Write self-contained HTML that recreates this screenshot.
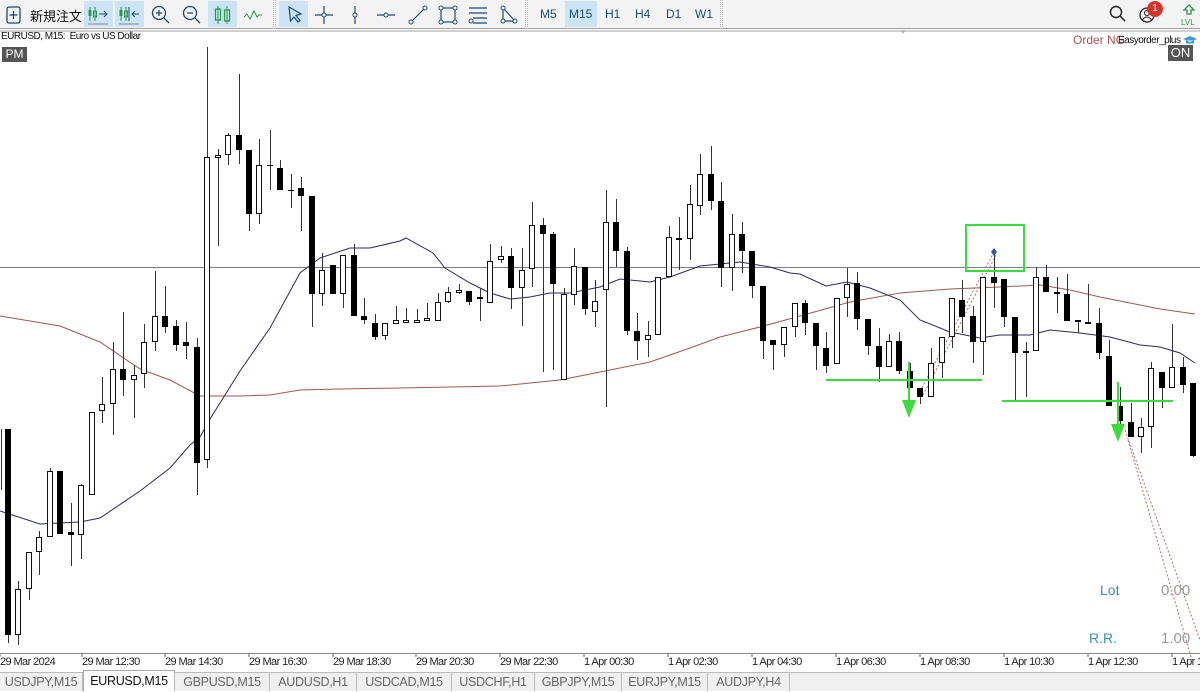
<!DOCTYPE html>
<html><head><meta charset="utf-8"><style>
*{margin:0;padding:0;box-sizing:border-box}
body{width:1200px;height:691px;overflow:hidden;background:#fff;font-family:"Liberation Sans","Noto Sans CJK JP",sans-serif;position:relative}
#tb{position:absolute;left:0;top:0;width:1200px;height:29px;background:#f3f3f3;border-bottom:1px solid #a0a0a0}
#tb2{position:absolute;left:0;top:30px;width:1200px;height:2px;background:#d0d0d0}
.hl{position:absolute;top:1px;height:26px;background:#cce4f7}
.ic{position:absolute;top:4px}
.tf{position:absolute;top:7px;font-size:12px;color:#1a4a7a}
.sep{position:absolute;top:0;width:3px;height:29px;border-left:1px dotted #bbb;border-right:1px dotted #bbb}
.ax{position:absolute;top:656px;font-size:11px;color:#222;letter-spacing:-0.6px;white-space:nowrap}
#tabs{position:absolute;left:0;top:672px;width:1200px;height:19px;background:#f0f0f0;border-top:1px solid #bbb}
.tab{position:absolute;top:673px;height:18px;font-size:12.5px;color:#666;border-right:1px solid #bbb;text-align:center;line-height:18px;letter-spacing:-0.3px;white-space:nowrap}
</style></head><body>
<div id="tb"></div><div id="tb2"></div>
<svg class="ic" style="left:4px;top:5px" width="20" height="20" viewBox="0 0 20 20"><rect x="3" y="2" width="13" height="16" rx="2" fill="none" stroke="#1a4a7a" stroke-width="1.3"/><path d="M9.5 6v8M5.5 10h8" stroke="#1a4a7a" stroke-width="1.3"/></svg>
<div style="position:absolute;left:30px;top:6px;font-size:13px;color:#111">新規注文</div>
<div class="hl" style="left:84px;width:29px"></div>
<div class="hl" style="left:115px;width:29px"></div>
<div class="hl" style="left:208px;width:29px"></div>
<div class="hl" style="left:279px;width:29px"></div>
<div class="hl" style="left:565px;width:32px"></div>
<svg class="ic" style="left:86px" width="24" height="22"><path d="M4 3v14M9 3v14" stroke="#2a9a4a"/><rect x="2.5" y="6" width="3" height="6" fill="#2a9a4a"/><rect x="7.5" y="7" width="3" height="6" fill="none" stroke="#2a9a4a"/><path d="M13 10h8M18 7l3 3-3 3" stroke="#1a4a7a" fill="none"/><path d="M2 20h20" stroke="#888"/></svg>
<svg class="ic" style="left:117px" width="24" height="22"><path d="M4 3v14M9 3v14" stroke="#2a9a4a"/><rect x="2.5" y="6" width="3" height="6" fill="#2a9a4a"/><rect x="7.5" y="7" width="3" height="6" fill="none" stroke="#2a9a4a"/><path d="M12 3v14M22 10h-7M18 7l-3 3 3 3" stroke="#1a4a7a" fill="none"/><path d="M2 20h20" stroke="#888"/></svg>
<svg class="ic" style="left:150px" width="22" height="22"><circle cx="9" cy="9" r="6.5" fill="none" stroke="#1a4a7a" stroke-width="1.3"/><path d="M14 14l5 5M6 9h6M9 6v6" stroke="#1a4a7a" stroke-width="1.3"/></svg>
<svg class="ic" style="left:181px" width="22" height="22"><circle cx="9" cy="9" r="6.5" fill="none" stroke="#1a4a7a" stroke-width="1.3"/><path d="M14 14l5 5M6 9h6" stroke="#1a4a7a" stroke-width="1.3"/></svg>
<svg class="ic" style="left:212px" width="22" height="22"><path d="M6 2v18M15 2v18" stroke="#2a9a4a"/><rect x="3.5" y="5" width="5" height="11" fill="none" stroke="#2a9a4a" stroke-width="1.3"/><rect x="12.5" y="6" width="5" height="11" fill="none" stroke="#2a9a4a" stroke-width="1.3"/></svg>
<svg class="ic" style="left:242px" width="22" height="22"><path d="M2 13l3-3 3 5 4-8 3 6 2-2h3" stroke="#2a9a4a" fill="none"/></svg>
<div class="sep" style="left:273px"></div>
<svg class="ic" style="left:284px" width="22" height="22"><path d="M5 3l12 7-5 1.5 4 5-2 1.5-4-5-3.5 4z" fill="none" stroke="#1a4a7a" stroke-width="1.2"/></svg>
<svg class="ic" style="left:313px" width="22" height="22"><path d="M11 2v18M2 11h18" stroke="#1a4a7a" stroke-width="1.2"/><circle cx="11" cy="11" r="2" fill="#fff" stroke="#1a4a7a"/></svg>
<svg class="ic" style="left:344px" width="22" height="22"><path d="M11 2v18" stroke="#1a4a7a" stroke-width="1.2"/><circle cx="11" cy="11" r="2" fill="#fff" stroke="#1a4a7a"/></svg>
<svg class="ic" style="left:375px" width="22" height="22"><path d="M2 11h18" stroke="#1a4a7a" stroke-width="1.2"/><circle cx="11" cy="11" r="2" fill="#fff" stroke="#1a4a7a"/></svg>
<svg class="ic" style="left:407px" width="22" height="22"><path d="M4 18L18 4" stroke="#1a4a7a" stroke-width="1.2"/><circle cx="4" cy="18" r="2" fill="#fff" stroke="#1a4a7a"/><circle cx="18" cy="4" r="2" fill="#fff" stroke="#1a4a7a"/></svg>
<svg class="ic" style="left:437px" width="22" height="22"><rect x="4" y="4" width="14" height="14" fill="none" stroke="#1a4a7a" stroke-width="1.2"/><g fill="#fff" stroke="#1a4a7a"><circle cx="4" cy="4" r="2"/><circle cx="18" cy="4" r="2"/><circle cx="4" cy="18" r="2"/><circle cx="18" cy="18" r="2"/></g></svg>
<svg class="ic" style="left:467px" width="22" height="22"><path d="M2 4h18M2 9h18M6 14h14M6 19h14" stroke="#1a4a7a" stroke-width="1.2"/><circle cx="4" cy="17" r="2" fill="#fff" stroke="#1a4a7a"/></svg>
<svg class="ic" style="left:498px" width="22" height="22"><path d="M5 4L17 17H5z" fill="none" stroke="#1a4a7a" stroke-width="1.2"/><g fill="#fff" stroke="#1a4a7a"><circle cx="5" cy="4" r="2"/><circle cx="17" cy="17" r="2"/><circle cx="5" cy="17" r="2"/></g></svg>
<div class="sep" style="left:525px"></div>
<div class="tf" style="left:540px">M5</div>
<div class="tf" style="left:569px">M15</div>
<div class="tf" style="left:605px">H1</div>
<div class="tf" style="left:635px">H4</div>
<div class="tf" style="left:666px">D1</div>
<div class="tf" style="left:695px">W1</div>
<div class="sep" style="left:720px"></div>
<svg class="ic" style="left:1108px" width="20" height="20"><circle cx="8" cy="8" r="5.5" fill="none" stroke="#222" stroke-width="1.4"/><path d="M12 12l5 5" stroke="#222" stroke-width="1.5"/></svg>
<svg class="ic" style="left:1138px;top:6px" width="20" height="20"><circle cx="9" cy="9" r="7" fill="none" stroke="#222" stroke-width="1.3"/><circle cx="9" cy="7" r="2.5" fill="none" stroke="#222"/><path d="M4.5 14c2-4 7-4 9 0" fill="none" stroke="#222"/></svg>
<div style="position:absolute;left:1147px;top:1px;width:16px;height:16px;border-radius:8px;background:#d8342a;color:#fff;font-size:10px;text-align:center;line-height:16px">1</div>
<svg class="ic" style="left:1180px;top:3px" width="18" height="24"><path d="M9 2l5 5h-3v4H7V7H4z" fill="none" stroke="#2a9a4a" stroke-width="1.3"/><text x="1" y="22" font-size="8" fill="#2a9a4a" font-family="Liberation Sans">LVL</text></svg>
<div style="position:absolute;left:1px;top:31px;font-size:10px;color:#111;letter-spacing:-0.5px">EURUSD, M15:&nbsp; Euro vs US Dollar</div>
<div style="position:absolute;left:2px;top:47px;width:25px;height:15px;background:#555;color:#fff;font-size:12px;line-height:15px;text-align:center">PM</div>
<div style="position:absolute;left:1073px;top:33px;font-size:12px;color:#b05050">Order NG</div>
<div style="position:absolute;left:1118px;top:35px;font-size:10px;color:#111;letter-spacing:-0.5px">Easyorder_plus</div>
<svg style="position:absolute;left:1182px;top:35px" width="16" height="10"><path d="M1 4l7-3 7 3-7 3z M4 5.5v3h8v-3" fill="#3a9ad8"/></svg>
<div style="position:absolute;left:1168px;top:45px;width:25px;height:16px;background:#555;color:#fff;font-size:13px;line-height:16px;text-align:center">ON</div>
<svg style="position:absolute;left:0;top:0" width="1200" height="672">
<path d="M900 30l3 4 3-4z" fill="#bbb"/>
<path d="M0 267.5H1200" stroke="#7a7a95" stroke-width="1"/>
<polyline fill="none" stroke="#9c5a50" stroke-width="1" points="0,316 60,326 100,342 140,369 170,380 200,396 240,396 270,395 300,390 340,389 400,388 500,386 560,380 610,370 650,362 690,348 720,337 760,327 800,316 850,302 900,293 950,289 1000,287 1040,285 1070,290 1100,297 1130,303 1160,309 1195,314"/>
<polyline fill="none" stroke="#2a2a60" stroke-width="1" points="0,511 40,524 80,522 100,518 140,491 170,468 190,445 200,437 210,419 240,371 270,328 300,273 320,258 350,248 370,248 400,241 406,238 433,253 445,268 470,283 490,293 510,299 530,297 550,293 570,293 600,287 620,279 650,282 670,277 700,266 720,264 740,262 770,267 790,273 800,274 826,286 847,282 870,288 900,300 920,320 950,332 980,338 1000,335 1030,335 1050,330 1080,333 1110,337 1140,345 1160,347 1180,353 1195,363"/>
<g stroke="#b07060" stroke-width="1" stroke-dasharray="2,2" fill="none"><path d="M918 395L994 252M923 395L996 255M1125 430L1200 640M1128 440L1192 660"/></g>
<path d="M1 429V490M8 429V643M18 581V645M29 552V600M39 531V575M50 468V537M60 471V534M71 503V566M81 484V559M92 412V495M102 377V423M113 342V435M123 312V396M134 365V418M144 324V388M155 271V351M165 286V333M176 320V351M186 322V359M197 338V495M207 47V468M218 149V246M228 133V165M239 74V164M249 150V231M259 139V224M270 130V190M280 160V190M291 174V208M301 177V231M312 196V327M322 253V306M333 265V294M343 255V308M354 244V316M364 298V324M375 314V340M385 323V340M396 306V324M406 308V323M417 309V322M427 303V320M438 293V321M448 287V303M459 284V294M469 291V305M480 288V321M490 244V303M501 246V263M511 248V309M522 248V326M532 202V287M543 218V372M553 232V370M564 288V380M574 248V305M585 267V315M595 280V327M606 190V407M616 199V267M627 247V335M637 313V360M648 321V357M658 277V335M669 226V277M679 217V270M690 185V260M700 154V215M711 146V210M721 182V287M732 214V291M742 222V273M752 251V298M763 286V359M773 340V370M784 327V357M795 303V337M805 300V335M816 323V370M826 332V373M837 298V364M847 268V317M857 272V330M868 319V355M879 328V382M889 334V367M899 332V374M910 363V388M920 388V404M931 348V397M942 337V378M952 298V348M962 280V333M973 306V363M983 277V375M994 252V308M1004 279V327M1015 317V401M1026 342V397M1036 267V351M1046 265V292M1057 277V313M1067 274V321M1078 321V333M1088 284V323M1099 308V359M1109 340V406M1120 387V433M1131 403V437M1141 418V453M1151 362V448M1162 372V408M1172 324V388M1183 357V393M1193 383V457" stroke="#333" stroke-width="1" transform="translate(.5 0)"/>
<path fill="#000" d="M5 429h6V635h-6zM57 471h6V534h-6zM68 532h6V535h-6zM120 369h6V380h-6zM162 316h6V327h-6zM173 326h6V345h-6zM183 342h6V346h-6zM194 347h6V463h-6zM236 135h6V150h-6zM246 150h6V214h-6zM267 165h6V166h-6zM277 168h6V190h-6zM288 190h6V191h-6zM298 188h6V196h-6zM309 196h6V294h-6zM330 265h6V294h-6zM351 255h6V316h-6zM361 316h6V320h-6zM372 323h6V337h-6zM466 291h6V302h-6zM477 297h6V299h-6zM508 256h6V288h-6zM540 225h6V234h-6zM550 234h6V284h-6zM582 267h6V309h-6zM613 222h6V251h-6zM624 251h6V331h-6zM634 331h6V341h-6zM676 238h6V240h-6zM708 174h6V201h-6zM718 201h6V268h-6zM739 234h6V251h-6zM749 251h6V286h-6zM760 286h6V341h-6zM770 340h6V345h-6zM802 303h6V323h-6zM813 323h6V346h-6zM823 348h6V366h-6zM854 283h6V319h-6zM865 319h6V346h-6zM876 346h6V367h-6zM896 341h6V371h-6zM907 371h6V388h-6zM917 388h6V397h-6zM959 300h6V317h-6zM970 316h6V342h-6zM991 277h6V283h-6zM1001 279h6V317h-6zM1012 317h6V353h-6zM1043 277h6V292h-6zM1054 292h6V294h-6zM1064 294h6V321h-6zM1075 320h6V322h-6zM1096 323h6V353h-6zM1106 356h6V406h-6zM1117 406h6V421h-6zM1128 422h6V437h-6zM1159 372h6V388h-6zM1180 367h6V385h-6zM1190 383h6V456h-6z"/>
<path fill="#fff" stroke="#111" stroke-width="1" d="M15.5 589.5h5V634.5h-5zM26.5 552.5h5V588.5h-5zM36.5 537.5h5V551.5h-5zM47.5 471.5h5V536.5h-5zM78.5 485.5h5V534.5h-5zM89.5 412.5h5V494.5h-5zM99.5 404.5h5V410.5h-5zM110.5 369.5h5V403.5h-5zM131.5 375.5h5V379.5h-5zM141.5 342.5h5V373.5h-5zM152.5 316.5h5V341.5h-5zM204.5 157.5h5V459.5h-5zM215.5 155.5h5V157.5h-5zM225.5 135.5h5V154.5h-5zM256.5 165.5h5V213.5h-5zM319.5 270.5h5V293.5h-5zM340.5 255.5h5V293.5h-5zM382.5 323.5h5V335.5h-5zM393.5 320.5h5V323.5h-5zM403.5 320.5h5V322.5h-5zM414.5 320.5h5V322.5h-5zM424.5 318.5h5V320.5h-5zM435.5 302.5h5V320.5h-5zM445.5 292.5h5V301.5h-5zM456.5 290.5h5V292.5h-5zM487.5 261.5h5V302.5h-5zM498.5 256.5h5V259.5h-5zM519.5 270.5h5V287.5h-5zM529.5 225.5h5V268.5h-5zM561.5 294.5h5V379.5h-5zM571.5 266.5h5V294.5h-5zM592.5 301.5h5V311.5h-5zM603.5 222.5h5V289.5h-5zM645.5 335.5h5V339.5h-5zM655.5 277.5h5V334.5h-5zM666.5 237.5h5V276.5h-5zM687.5 204.5h5V238.5h-5zM697.5 174.5h5V205.5h-5zM729.5 234.5h5V267.5h-5zM781.5 327.5h5V344.5h-5zM792.5 303.5h5V326.5h-5zM834.5 298.5h5V363.5h-5zM844.5 284.5h5V297.5h-5zM886.5 341.5h5V366.5h-5zM928.5 363.5h5V396.5h-5zM939.5 337.5h5V362.5h-5zM949.5 298.5h5V336.5h-5zM980.5 277.5h5V341.5h-5zM1023.5 351.5h5V352.5h-5zM1033.5 277.5h5V350.5h-5zM1085.5 322.5h5V323.5h-5zM1138.5 427.5h5V436.5h-5zM1148.5 368.5h5V426.5h-5zM1169.5 367.5h5V387.5h-5z"/>
<g stroke="#3ddc3d" fill="none" stroke-width="2">
<rect x="966" y="225" width="58" height="46"/>
<path d="M826 380H982M1002 401H1173M909 362V402M1118 382V426"/>
</g>
<path d="M902 400h14l-7 18zM1111 424h14l-7 18z" fill="#3ddc3d"/>
<path d="M994 248l3 4-3 4-3-4z" fill="#2a5aa0"/>
<path d="M0 653.5H1200" stroke="#888"/>
<g stroke="#666"><path d="M0 653v4M82 653v4M165 653v4M249 653v4M333 653v4M416 653v4M500 653v4M584 653v4M668 653v4M752 653v4M836 653v4M920 653v4M1004 653v4M1088 653v4M1172 653v4"/></g>
<text x="1100" y="595" font-size="14" fill="#3a8fc4" font-family="Liberation Sans">Lot</text>
<text x="1161" y="595" font-size="15" fill="#999" font-family="Liberation Sans">0.00</text>
<text x="1089" y="643" font-size="14" fill="#3a8fc4" font-family="Liberation Sans">R.R.</text>
<text x="1161" y="643" font-size="15" fill="#999" font-family="Liberation Sans">1.00</text>
</svg>
<div class="ax" style="left:0">29 Mar 2024</div>
<div class="ax" style="left:82px">29 Mar 12:30</div>
<div class="ax" style="left:165px">29 Mar 14:30</div>
<div class="ax" style="left:249px">29 Mar 16:30</div>
<div class="ax" style="left:333px">29 Mar 18:30</div>
<div class="ax" style="left:416px">29 Mar 20:30</div>
<div class="ax" style="left:500px">29 Mar 22:30</div>
<div class="ax" style="left:584px">1 Apr 00:30</div>
<div class="ax" style="left:668px">1 Apr 02:30</div>
<div class="ax" style="left:752px">1 Apr 04:30</div>
<div class="ax" style="left:836px">1 Apr 06:30</div>
<div class="ax" style="left:920px">1 Apr 08:30</div>
<div class="ax" style="left:1004px">1 Apr 10:30</div>
<div class="ax" style="left:1088px">1 Apr 12:30</div>
<div class="ax" style="left:1172px">1 Apr 1</div>
<div id="tabs"></div>
<div class="tab" style="left:0;width:83px">USDJPY,M15</div>
<div class="tab" style="left:83px;width:92px;top:670px;height:21px;background:#fff;color:#111;border-left:1px solid #aaa;border-top:1px solid #aaa;line-height:21px">EURUSD,M15</div>
<div class="tab" style="left:175px;width:95px">GBPUSD,M15</div>
<div class="tab" style="left:270px;width:87px">AUDUSD,H1</div>
<div class="tab" style="left:357px;width:95px">USDCAD,M15</div>
<div class="tab" style="left:452px;width:83px">USDCHF,H1</div>
<div class="tab" style="left:535px;width:87px">GBPJPY,M15</div>
<div class="tab" style="left:622px;width:86px">EURJPY,M15</div>
<div class="tab" style="left:708px;width:82px">AUDJPY,H4</div>
</body></html>
